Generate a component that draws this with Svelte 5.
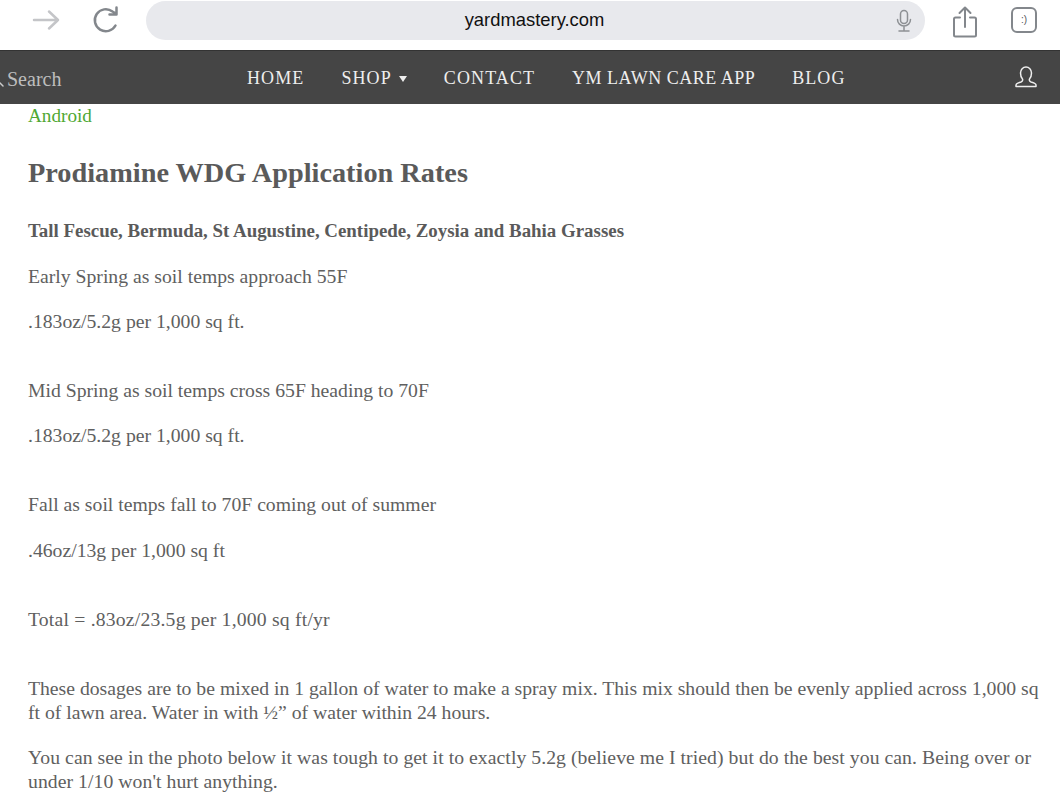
<script>
  const links = ['HOME', 'SHOP', 'CONTACT', 'YM LAWN CARE APP', 'BLOG']
</script>

<div class="page">
  <header class="toolbar">
    <div class="nav-btns">
      <svg class="forward" width="30" height="24" viewBox="0 0 30 24"><path d="M3 12H27M18 3.500 27 12 18 20.500" /></svg>
      <svg class="reload" width="30" height="30" viewBox="0 0 30 30"><path d="M24.500 20.500A11 11 0 1 1 21.500 6.500L25.500 9M25.500 2.500V9.500H18.500" /></svg>
    </div>
    <div class="address">
      <span class="url">yardmastery.com</span>
      <svg class="mic" width="18" height="24" viewBox="0 0 18 24"><rect x="5.500" y="1.500" width="7" height="13" rx="3.500" /><path d="M2.500 10.500a6.500 6.500 0 0 0 13 0M9 17v4M4 22h10" /></svg>
    </div>
    <svg class="share" width="26" height="32" viewBox="0 0 26 32"><path d="M8 11.500H3.500a1.500 1.500 0 0 0-1.500 1.500V29a1.500 1.500 0 0 0 1.500 1.500h19a1.500 1.500 0 0 0 1.500-1.500V13a1.500 1.500 0 0 0-1.500-1.500H18M13 21V2M7.500 7 13 1.500 18.500 7" /></svg>
    <div class="tabs">:)</div>
  </header>

  <nav class="menu">
    <svg class="glass" width="4" height="6" viewBox="0 0 4 6"><path d="M-1 1 3 5" /></svg>
    <span class="search">Search</span>
    <ul>
      {#each links as link}
        <li class:tight={link.length > 10}>{link}{#if link === 'SHOP'}<i class="caret"></i>{/if}</li>
      {/each}
    </ul>
    <svg class="user" width="24" height="24" viewBox="0 0 24 24"><path d="M2 21.500V20c0-1.500 2-2 5-3 1.500-.6 2-1.500 1.500-3C7 12.500 6.500 10 6.500 8c0-3.500 2.500-6 5.500-6s5.500 2.500 5.500 6c0 2-.5 4.500-2 6-.5 1.500 0 2.400 1.500 3 3 1 5 1.500 5 3v1.500Z" /></svg>
  </nav>

  <main class="content">
    <a class="android" href="#android">Android</a>
    <h2>Prodiamine WDG Application Rates</h2>
    <p class="lead"><strong>Tall Fescue, Bermuda, St Augustine, Centipede, Zoysia and Bahia Grasses</strong></p>
    <p>Early Spring as soil temps approach 55F</p>
    <p class="gap">.183oz/5.2g per 1,000 sq ft.</p>
    <p>Mid Spring as soil temps cross 65F heading to 70F</p>
    <p class="gap">.183oz/5.2g per 1,000 sq ft.</p>
    <p>Fall as soil temps fall to 70F coming out of summer</p>
    <p class="gap">.46oz/13g per 1,000 sq ft</p>
    <p class="gap total">Total = .83oz/23.5g per 1,000 sq ft/yr</p>
    <p>These dosages are to be mixed in 1 gallon of water to make a spray mix. This mix should then be evenly applied across 1,000 sq<br />ft of lawn area. Water in with ½” of water within 24 hours.</p>
    <p class="wide">You can see in the photo below it was tough to get it to exactly 5.2g (believe me I tried) but do the best you can. Being over or<br />under 1/10 won't hurt anything.</p>
  </main>
</div>

<style>
  :global(body) {
    margin: 0;
    background: #fff;
  }

  .page {
    width: 1060px;
    height: 800px;
    overflow: hidden;
    font-family: "Liberation Serif", serif;
  }

  .toolbar {
    height: 40px;
    margin-bottom: 10px;
    display: flex;
    align-items: center;
    padding-left: 31px;
    box-sizing: border-box;
  }

  svg {
    fill: none;
    stroke-linecap: round;
    stroke-linejoin: round;
    flex: none;
  }

  .nav-btns {
    display: flex;
    align-items: center;
    gap: 30px;
    width: 115px;
  }

  .forward path {
    stroke: #c4c5c8;
    stroke-width: 2.500;
  }

  .reload path {
    stroke: #83878c;
    stroke-width: 2.500;
  }

  .address {
    width: 779px;
    height: 39px;
    border-radius: 20px;
    background: #e8e9ed;
    position: relative;
    display: flex;
    align-items: center;
    justify-content: center;
  }

  .url {
    font: 18.400px "Liberation Sans", sans-serif;
    color: #111;
    margin-right: 2px;
  }

  .mic {
    position: absolute;
    right: 12px;
    top: 8px;
  }

  .mic rect, .mic path {
    stroke: #8d9094;
    stroke-width: 1.500;
  }

  .share {
    margin-left: 27px;
    margin-top: 3px;
  }

  .share path {
    stroke: #83878c;
    stroke-width: 2;
  }

  .tabs {
    width: 22px;
    height: 22px;
    margin-left: 33px;
    border: 2px solid #83878c;
    border-radius: 6px;
    color: #55585c;
    font: 10px/22px "Liberation Sans", sans-serif;
    text-align: center;
  }

  .menu {
    height: 54px;
    background: #454545;
    border-top: 1px solid #333;
    box-sizing: border-box;
    display: flex;
    align-items: center;
    position: relative;
    color: #eee;
  }

  .glass {
    position: absolute;
    left: 0;
    top: 30px;
  }

  .glass path {
    stroke: #ccc;
    stroke-width: 1.500;
  }

  .search {
    position: absolute;
    left: 7px;
    top: 17px;
    font-size: 20px;
    color: #bdbdbd;
  }

  .menu ul {
    list-style: none;
    display: flex;
    gap: 37px;
    margin: 0 0 0 247px;
    padding: 2px 0 0;
  }

  .menu li {
    font-size: 18px;
    letter-spacing: 1.100px;
    white-space: nowrap;
  }

  .menu li.tight {
    letter-spacing: 0.500px;
  }

  .caret {
    display: inline-block;
    margin-left: 7px;
    vertical-align: 2px;
    border-left: 4.500px solid transparent;
    border-right: 4.500px solid transparent;
    border-top: 6px solid #eee;
  }

  .user {
    position: absolute;
    right: 22px;
    top: 14px;
  }

  .user path {
    stroke: #eee;
    stroke-width: 1.500;
  }

  .content {
    padding: 0 0 0 28px;
    color: #606060;
    font-size: 19.700px;
    line-height: 24px;
  }

  .android {
    display: block;
    color: #4fa832;
    font-size: 19.200px;
    text-decoration: none;
  }

  h2 {
    margin: 29px 0 29px;
    font-size: 28.300px;
    line-height: 32px;
    font-weight: bold;
    color: #5a5a5a;
  }

  strong {
    font-size: 18.900px;
    color: #5a5a5a;
  }

  p {
    margin: 0 0 21.400px;
    white-space: nowrap;
  }

  .lead {
    margin-bottom: 20.600px;
  }

  .gap {
    margin-bottom: 45px;
  }

  .total {
    letter-spacing: 0.190px;
  }

  .wide {
    letter-spacing: 0.060px;
  }
</style>
